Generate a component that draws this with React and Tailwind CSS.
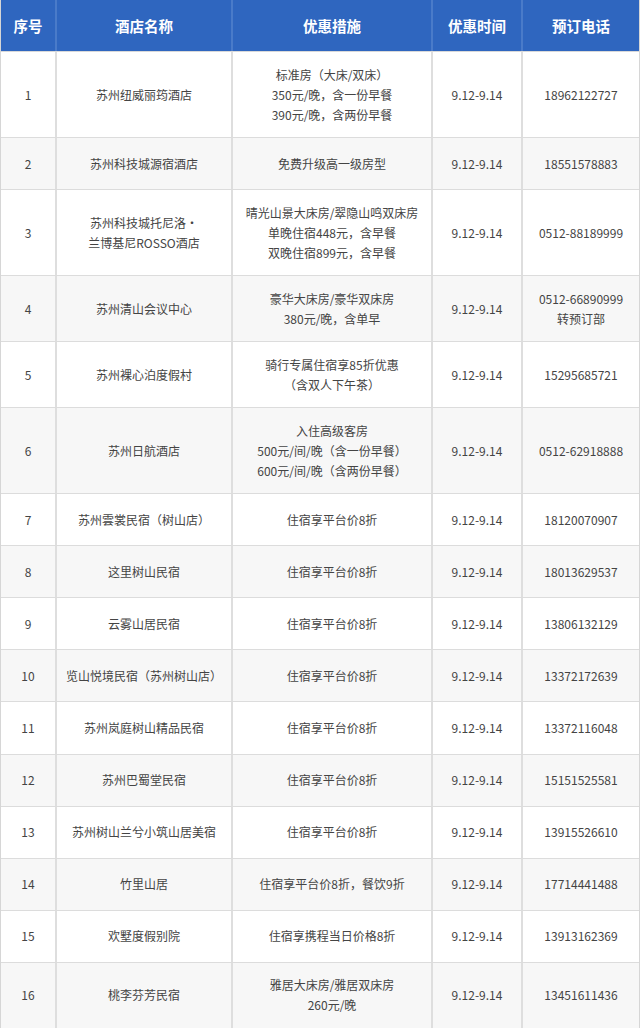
import React from "react";

const rows = [
  ["1", ["苏州纽威丽筠酒店"], ["标准房（大床/双床）", "350元/晚，含一份早餐", "390元/晚，含两份早餐"], ["18962122727"]],
  ["2", ["苏州科技城源宿酒店"], ["免费升级高一级房型"], ["18551578883"]],
  ["3", ["苏州科技城托尼洛•", "兰博基尼ROSSO酒店"], ["晴光山景大床房/翠隐山鸣双床房", "单晚住宿448元，含早餐", "双晚住宿899元，含早餐"], ["0512-88189999"]],
  ["4", ["苏州清山会议中心"], ["豪华大床房/豪华双床房", "380元/晚，含单早"], ["0512-66890999", "转预订部"]],
  ["5", ["苏州裸心泊度假村"], ["骑行专属住宿享85折优惠", "（含双人下午茶）"], ["15295685721"]],
  ["6", ["苏州日航酒店"], ["入住高级客房", "500元/间/晚（含一份早餐）", "600元/间/晚（含两份早餐）"], ["0512-62918888"]],
  ["7", ["苏州雲裳民宿（树山店）"], ["住宿享平台价8折"], ["18120070907"]],
  ["8", ["这里树山民宿"], ["住宿享平台价8折"], ["18013629537"]],
  ["9", ["云雾山居民宿"], ["住宿享平台价8折"], ["13806132129"]],
  ["10", ["览山悦境民宿（苏州树山店）"], ["住宿享平台价8折"], ["13372172639"]],
  ["11", ["苏州岚庭树山精品民宿"], ["住宿享平台价8折"], ["13372116048"]],
  ["12", ["苏州巴蜀堂民宿"], ["住宿享平台价8折"], ["15151525581"]],
  ["13", ["苏州树山兰兮小筑山居美宿"], ["住宿享平台价8折"], ["13915526610"]],
  ["14", ["竹里山居"], ["住宿享平台价8折，餐饮9折"], ["17714441488"]],
  ["15", ["欢墅度假别院"], ["住宿享携程当日价格8折"], ["13913162369"]],
  ["16", ["桃李芬芳民宿"], ["雅居大床房/雅居双床房", "260元/晚"], ["13451611436"]],
];

const grid = "grid grid-cols-[56px_176px_200px_90px_1fr]";

const Cell = ({ lines, last }) => (
  <div
    className={`flex flex-col items-center justify-center text-center py-[12.5px] ${
      last ? "" : "border-r-2 border-[#dedede]"
    }`}
  >
    {lines.map((l, i) => (
      <span key={i} className="leading-[20px]">
        {l}
      </span>
    ))}
  </div>
);

export default function App() {
  return (
    <div
      className="w-[640px] bg-white text-[12px] text-[#444]"
      style={{ fontFamily: '"Noto Sans CJK SC", "Noto Sans", sans-serif' }}
    >
      <div className="border-x border-[#d6d6d6]">
        <div className={`${grid} h-[52px] bg-[#2f66bf] text-white text-[14.5px] font-bold border-b border-[#d9d9d9]`}>
          {["序号", "酒店名称", "优惠措施", "优惠时间", "预订电话"].map((h, i) => (
            <div
              key={h}
              className={`flex items-center justify-center ${
                i < 4 ? "border-r-2 border-[#4a7bc9]" : ""
              }`}
            >
              {h}
            </div>
          ))}
        </div>
        {rows.map(([no, name, offer, phone], idx) => (
          <div
            key={no}
            className={`${grid} min-h-[52.1px] border-b border-[#dcdcdc] ${
              idx % 2 === 1 ? "bg-[#f7f7f7]" : "bg-white"
            }`}
          >
            <Cell lines={[no]} />
            <Cell lines={name} />
            <Cell lines={offer} />
            <Cell lines={["9.12-9.14"]} />
            <Cell lines={phone} last />
          </div>
        ))}
      </div>
    </div>
  );
}
